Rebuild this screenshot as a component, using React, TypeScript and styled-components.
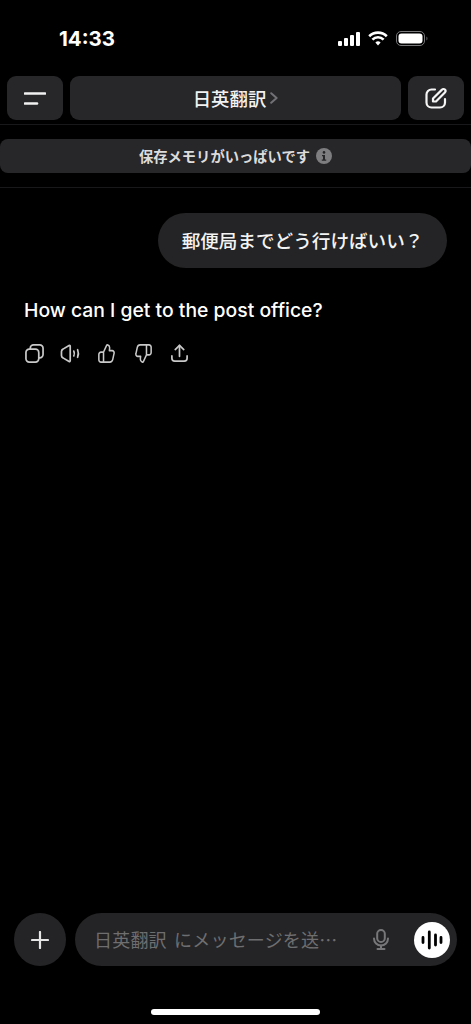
import React from "react";
import styled, { createGlobalStyle } from "styled-components";

const Global = createGlobalStyle`
  html, body { margin: 0; padding: 0; background: #000; }
  * { box-sizing: border-box; }
`;

const Screen = styled.div`
  width: 471px;
  height: 1024px;
  background: #000;
  color: #fff;
  display: flex;
  flex-direction: column;
  overflow: hidden;
  font-family: Inter, "Noto Sans CJK JP", sans-serif;
`;

const StatusBar = styled.div`
  height: 76px;
  flex: none;
  display: flex;
  justify-content: space-between;
  align-items: flex-start;
  padding: 27px 41px 0 59px;
`;

const Time = styled.span`
  font-size: 20.5px;
  font-weight: 700;
  line-height: 23px;
`;

const StatusIcons = styled.div`
  display: flex;
  align-items: center;
  gap: 8px;
  height: 23px;
  margin-right: 1px;
`;

const Header = styled.div`
  flex: none;
  height: 44px;
  display: flex;
  gap: 7px;
  padding: 0 7px 0 7px;
`;

const HeaderButton = styled.div`
  flex: none;
  width: 56px;
  background: #27272a;
  border-radius: 9px;
  display: flex;
  align-items: center;
  justify-content: center;
`;

const TitleButton = styled.div`
  flex: 1;
  background: #27272a;
  border-radius: 9px;
  display: flex;
  align-items: center;
  justify-content: center;
  gap: 4px;
  padding-bottom: 1px;
  font-size: 18.4px;
  font-weight: 500;
  color: #f2f2f2;
`;

const Divider = styled.div<{ $top: number }>`
  flex: none;
  height: 1px;
  background: #18181a;
  margin-top: ${(p) => p.$top}px;
`;

const Banner = styled.div`
  flex: none;
  margin-top: 14px;
  height: 34px;
  background: #27272a;
  border-radius: 8px;
  display: flex;
  align-items: center;
  justify-content: center;
  gap: 6px;
  padding-bottom: 1px;
  font-size: 14.3px;
  font-weight: 700;
  color: #dcdcdc;
`;

const Thread = styled.div`
  flex: 1;
  display: flex;
  flex-direction: column;
  padding: 25px 24px 0;
`;

const Bubble = styled.div`
  align-self: flex-end;
  height: 55px;
  width: 289px;
  background: #242426;
  border-radius: 28px;
  display: flex;
  align-items: center;
  justify-content: center;
  padding-bottom: 3px;
  font-size: 18.6px;
  font-weight: 500;
  color: #f4f4f4;
`;

const Answer = styled.p`
  margin: 30px 0 0;
  font-size: 19.35px;
  line-height: 24px;
  font-weight: 500;
  color: #fff;
`;

const Actions = styled.div`
  display: flex;
  align-items: center;
  margin: 20px 0 0 -8px;
  height: 22px;
  color: #c9c9c9;
`;

const ActionSlot = styled.div`
  width: 36.3px;
  display: flex;
  justify-content: center;
`;

const Composer = styled.div`
  flex: none;
  height: 53px;
  display: flex;
  gap: 9px;
  padding: 0 14px;
`;

const PlusButton = styled.div`
  flex: none;
  width: 52px;
  height: 53px;
  border-radius: 50%;
  background: #242426;
  display: flex;
  align-items: center;
  justify-content: center;
`;

const Field = styled.div`
  flex: 1;
  background: #242426;
  border-radius: 27px;
  display: flex;
  align-items: center;
  padding: 0 7px 0 19px;
`;

const Placeholder = styled.span`
  flex: 1;
  font-family: "Noto Sans CJK JP", sans-serif;
  font-size: 18px;
  line-height: 24px;
  margin-top: -2px;
  letter-spacing: 0.2px;
  word-spacing: 3px;
  color: #6e6e70;
  white-space: nowrap;
`;

const MicSlot = styled.div`
  display: flex;
  margin-right: 25px;
`;

const SendButton = styled.div`
  flex: none;
  width: 36px;
  height: 36px;
  border-radius: 50%;
  background: #fff;
  display: flex;
  align-items: center;
  justify-content: center;
`;

const HomeZone = styled.div`
  flex: none;
  height: 58px;
  display: flex;
  justify-content: center;
  padding-top: 43px;
`;

const HomeBar = styled.div`
  width: 169px;
  height: 6px;
  border-radius: 3px;
  background: #fff;
`;

const Cell = () => (
  <svg width="22" height="14" viewBox="0 0 22 14" fill="#fff">
    <rect x="0" y="9" width="4" height="5" rx="1" />
    <rect x="6" y="6" width="4" height="8" rx="1" />
    <rect x="12" y="3" width="4" height="11" rx="1" />
    <rect x="18" y="0" width="4" height="14" rx="1" />
  </svg>
);

const Wifi = () => (
  <svg width="20" height="15" viewBox="0 0 20 15" fill="none" stroke="#fff" strokeWidth="2.6">
    <path d="M1.2 5.2a12.6 12.6 0 0 1 17.6 0" />
    <path d="M4.4 8.6a8 8 0 0 1 11.2 0" />
    <path d="M10 14.6l-2.6-3a3.6 3.6 0 0 1 5.2 0z" fill="#fff" stroke="none" />
  </svg>
);

const Battery = () => (
  <svg width="33" height="15" viewBox="0 0 33 15">
    <rect x="0.5" y="0.5" width="28" height="14" rx="4.5" fill="none" stroke="#77777a" />
    <rect x="2.5" y="2.5" width="24" height="10" rx="3" fill="#fff" />
    <path d="M30.5 5.5c1.2.4 1.2 3.6 0 4z" fill="#77777a" />
  </svg>
);

const Menu = () => (
  <svg width="22" height="13" viewBox="0 0 22 13" fill="none" stroke="#f2f2f2" strokeWidth="2.6" strokeLinecap="round">
    <path d="M1 1.5h20" />
    <path d="M1 11.5h12" />
  </svg>
);

const Chevron = () => (
  <svg width="8" height="12" viewBox="0 0 8 12" fill="none" stroke="#727276" strokeWidth="2" strokeLinecap="round" strokeLinejoin="round">
    <path d="M1.2 1.2 6.6 6l-5.400 4.800" />
  </svg>
);

const Compose = () => (
  <svg width="22" height="22" viewBox="0 0 22 22" fill="none" stroke="#f6f6f6" strokeWidth="2.2" strokeLinecap="round" strokeLinejoin="round">
    <path d="M10 2.500H6.500a5 5 0 0 0-5 5v8a5 5 0 0 0 5 5h8.500a5 5 0 0 0 5-5V12" />
    <path d="M8 14.500v-3L17 2.600a2 2 0 0 1 2.900 0 2 2 0 0 1 0 2.800L11 14.500z" />
  </svg>
);

const Info = () => (
  <svg width="16" height="16" viewBox="0 0 16 16">
    <circle cx="8" cy="8" r="8" fill="#7e7e80" />
    <circle cx="8" cy="4.400" r="1.300" fill="#27272a" />
    <path d="M6 7h3v4.400h1.200v1.300H5.800v-1.300H7V8.300H6z" fill="#27272a" />
  </svg>
);

const iconProps = {
  fill: "none",
  stroke: "currentColor",
  strokeWidth: 1.8,
  strokeLinecap: "round" as const,
  strokeLinejoin: "round" as const,
};

const CopyIcon = () => (
  <svg width="19" height="19" viewBox="0 0 20 20" {...iconProps}>
    <rect x="1" y="5.500" width="13.500" height="13.500" rx="3.500" />
    <path d="M5.500 5.500V4.500A3.500 3.500 0 0 1 9 1h6.500A3.500 3.500 0 0 1 19 4.500V11a3.500 3.500 0 0 1-3.500 3.500h-1" />
  </svg>
);

const SpeakerIcon = () => (
  <svg width="21" height="19" viewBox="0 0 21 20" {...iconProps}>
    <path d="M1 8a3 3 0 0 1 1.600-2.600L9 1.600c.6-.3 1.200.1 1.200.7v15.400c0 .6-.6 1-1.200.7l-6.400-3.800A3 3 0 0 1 1 12z" />
    <path d="M14 7.500c.7 1.500.7 3.500 0 5" />
    <path d="M18 6c1 2.500 1 5.500 0 8" />
  </svg>
);

const ThumbPath = "M6.500 8.500 10 1.800c.3-.6 1-1 1.700-.7 1.300.5 2.100 1.700 2 3.100L13.400 7h3.300a2.300 2.300 0 0 1 2.200 2.900l-1.600 6.500a3.500 3.500 0 0 1-3.400 2.600H6.500z M6.500 8.500H3.500A2.500 2.500 0 0 0 1 11v5.500A2.500 2.500 0 0 0 3.500 19h3";

const ThumbUp = () => (
  <svg width="17" height="19" viewBox="0 0 20 20" preserveAspectRatio="none" {...iconProps}>
    <path d={ThumbPath} />
  </svg>
);

const ThumbDown = () => (
  <svg width="17" height="19" viewBox="0 0 20 20" preserveAspectRatio="none" {...iconProps}>
    <g transform="rotate(180 10 10)">
      <path d={ThumbPath} />
    </g>
  </svg>
);

const ShareIcon = () => (
  <svg width="19" height="19" viewBox="0 0 20 20" {...iconProps}>
    <path d="M10 13V1.500" />
    <path d="M5.500 5.800 10 1.500l4.500 4.300" />
    <path d="M2 12.500V15a3 3 0 0 0 3 3h10a3 3 0 0 0 3-3v-2.500" />
  </svg>
);

const Plus = () => (
  <svg width="18" height="18" viewBox="0 0 18 18" stroke="#e6e6e6" strokeWidth="2.2" strokeLinecap="round">
    <path d="M9 1v16M1 9h16" />
  </svg>
);

const Mic = () => (
  <svg width="16" height="21" viewBox="0 0 16 21" fill="none" stroke="#77777a" strokeWidth="2" strokeLinecap="round">
    <rect x="4.200" y="1" width="7.600" height="12" rx="3.800" />
    <path d="M1 9.500a7 7 0 0 0 14 0" />
    <path d="M8 16.500v3.500M4.500 20h7" />
  </svg>
);

const Waveform = () => (
  <svg width="22" height="20" viewBox="0 0 22 20" stroke="#000" strokeWidth="2.8" strokeLinecap="round">
    <path d="M2 7.500v5M8.300 2v16M14.500 5v10M20 7.500v5" />
  </svg>
);

export default function App() {
  return (
    <Screen>
      <Global />
      <StatusBar>
        <Time>14:33</Time>
        <StatusIcons>
          <Cell />
          <Wifi />
          <Battery />
        </StatusIcons>
      </StatusBar>
      <Header>
        <HeaderButton>
          <Menu />
        </HeaderButton>
        <TitleButton>
          日英翻訳
          <Chevron />
        </TitleButton>
        <HeaderButton>
          <Compose />
        </HeaderButton>
      </Header>
      <Divider $top={4} />
      <Banner>
        保存メモリがいっぱいです
        <Info />
      </Banner>
      <Divider $top={14} />
      <Thread>
        <Bubble>郵便局までどう行けばいい？</Bubble>
        <Answer>How can I get to the post office?</Answer>
        <Actions>
          <ActionSlot><CopyIcon /></ActionSlot>
          <ActionSlot><SpeakerIcon /></ActionSlot>
          <ActionSlot><ThumbUp /></ActionSlot>
          <ActionSlot><ThumbDown /></ActionSlot>
          <ActionSlot><ShareIcon /></ActionSlot>
        </Actions>
      </Thread>
      <Composer>
        <PlusButton>
          <Plus />
        </PlusButton>
        <Field>
          <Placeholder>日英翻訳 にメッセージを送…</Placeholder>
          <MicSlot>
            <Mic />
          </MicSlot>
          <SendButton>
            <Waveform />
          </SendButton>
        </Field>
      </Composer>
      <HomeZone>
        <HomeBar />
      </HomeZone>
    </Screen>
  );
}
